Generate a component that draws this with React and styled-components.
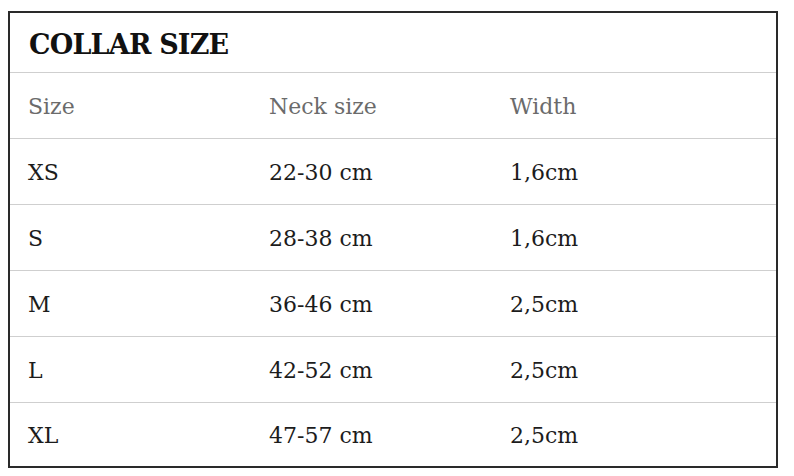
import React from "react";
import styled, { createGlobalStyle } from "styled-components";

const rows = [
	["XS", "22-30 cm", "1,6cm"],
	["S", "28-38 cm", "1,6cm"],
	["M", "36-46 cm", "2,5cm"],
	["L", "42-52 cm", "2,5cm"],
	["XL", "47-57 cm", "2,5cm"],
];

function App() {
	return (
		<Page>
			<GlobalStyle />
			<Frame>
				<Title>COLLAR SIZE</Title>
				<Row $head>
					<Cell>Size</Cell>
					<Cell>Neck size</Cell>
					<Cell>Width</Cell>
				</Row>
				{rows.map((r) => (
					<Row key={r[0]}>
						{r.map((c, i) => (
							<Cell key={i}>{c}</Cell>
						))}
					</Row>
				))}
			</Frame>
		</Page>
	);
}

const GlobalStyle = createGlobalStyle`
	body {
		margin: 0;
		background: #fff;
		font-family: "DejaVu Serif", "Liberation Serif", serif;
	}
`;

const Page = styled.div`
	padding: 11px 0 0 8px;
`;

const Frame = styled.div`
	width: 766px;
	border: 2px solid #2a2a2a;
	display: flex;
	flex-direction: column;
`;

const Title = styled.h2`
	margin: 0;
	height: 60px;
	padding: 4px 0 0 19px;
	box-sizing: border-box;
	display: flex;
	align-items: center;
	font-size: 27px;
	font-weight: bold;
	letter-spacing: -0.8px;
	color: #111;
	border-bottom: 1px solid #cfcfcf;
`;

const Row = styled.div`
	display: grid;
	grid-template-columns: 241px 241px 1fr;
	align-items: center;
	height: 65px;
	padding-left: 18px;
	font-size: 22px;
	color: ${(p) => (p.$head ? "#6b6b6b" : "#1c1c1c")};
	&:not(:last-child) {
		border-bottom: 1px solid #cfcfcf;
	}
	&:last-child {
		height: 63px;
	}
`;

const Cell = styled.div`
	padding-top: 1px;
`;

export default App;
